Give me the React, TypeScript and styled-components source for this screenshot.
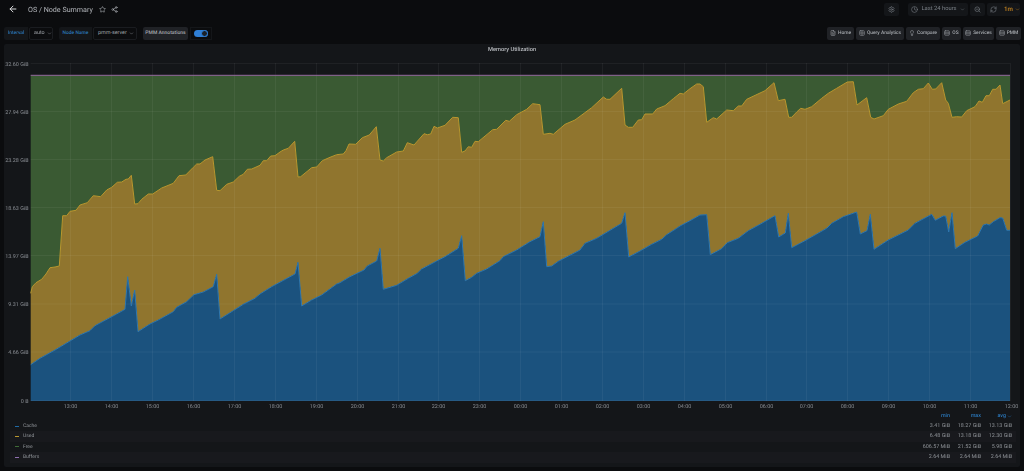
import React from "react";
import styled, { createGlobalStyle } from "styled-components";
import { ArrowLeft, Star, Share2, Settings, Clock, ZoomOut, RefreshCw, ChevronDown, FileText, Grid2x2, Lightbulb, Rows3 } from "lucide-react";

const Global = createGlobalStyle`
  html, body { margin: 0; height: 471px; overflow: hidden; background: #0b0c0e; }
  body { font-family: Roboto, "Liberation Sans", sans-serif; color: #c7d0d9; text-rendering: geometricPrecision; }
`;

const Page = styled.div`
  display: flex;
  flex-direction: column;
  height: 471px;
  width: 1024px;
  filter: blur(0.35px);
`;
const TopBar = styled.header`
  display: flex;
  align-items: center;
  height: 18px;
  padding: 0 4px 0 8px;
  flex: none;
`;
const Back = styled.span`
  display: flex;
  width: 20px;
  color: #d8d9da;
`;
const Title = styled.h1`
  margin: 1px 6px 0 0;
  font-size: 7.15px;
  line-height: 17px;
  font-weight: 400;
  color: #b4b7bc;
`;
const PlainIcon = styled.span`
  display: flex;
  margin-right: 5px;
  color: #b4b7bc;
`;
const Spacer = styled.div`
  flex: 1;
`;
const TopButton = styled.div<{ $w: number; $gap?: number }>`
  display: flex;
  align-items: center;
  justify-content: center;
  gap: 3px;
  width: ${(p) => p.$w}px;
  height: 13px;
  line-height: 13px;
  margin-left: ${(p) => p.$gap ?? 2}px;
  background: #141619;
  border-radius: 2px;
  font-size: 5.8px;
  color: #7b8087;
  white-space: nowrap;
`;
const RefreshButton = styled(TopButton)`
  justify-content: flex-start;
  box-sizing: border-box;
  padding-left: 3px;
  gap: 7px;
`;
const Orange = styled.span`
  color: #c9861f;
  display: flex;
  align-items: center;
  gap: 2px;
  font-size: 6.2px;
  font-weight: 500;
`;
const VarRow = styled.div`
  display: flex;
  align-items: center;
  height: 14px;
  margin-top: 8px;
  padding: 0 3px 0 4px;
  flex: none;
`;
const VarLabel = styled.div<{ $w: number }>`
  display: flex;
  align-items: center;
  justify-content: center;
  width: ${(p) => p.$w}px;
  height: 13px;
  line-height: 13px;
  background: #141619;
  border-radius: 2px 0 0 2px;
  color: #2a76b8;
  font-size: 4.9px;
  font-weight: 500;
  white-space: nowrap;
`;
const VarValue = styled.div<{ $w: number; $after?: number }>`
  display: flex;
  align-items: center;
  gap: 2px;
  width: ${(p) => p.$w}px;
  height: 13px;
  line-height: 11px;
  margin-left: 1px;
  margin-right: ${(p) => p.$after ?? 6}px;
  padding-left: 4px;
  box-sizing: border-box;
  background: #0b0c0e;
  border: 1px solid #1a1c20;
  border-radius: 2px;
  color: #9fa3a9;
  font-size: 5.4px;
  white-space: nowrap;
`;
const AnnotLabel = styled.div`
  display: flex;
  align-items: center;
  justify-content: center;
  width: 45px;
  height: 13px;
  line-height: 13px;
  background: #202226;
  border-radius: 2px;
  color: #a5a9ae;
  font-size: 5px;
  font-weight: 500;
  white-space: nowrap;
`;
const SwitchBox = styled.div`
  display: flex;
  align-items: center;
  justify-content: center;
  width: 22px;
  height: 13px;
  margin-left: 2px;
  background: #0b0c0e;
  border: 1px solid #141619;
  box-sizing: border-box;
`;
const SwitchTrack = styled.div`
  position: relative;
  width: 14px;
  height: 7px;
  border-radius: 4px;
  background: #2f7fd6;
`;
const SwitchKnob = styled.div`
  position: absolute;
  right: 0;
  top: 0;
  width: 5px;
  height: 5px;
  border: 1px solid #2f7fd6;
  border-radius: 50%;
  background: #1b2128;
`;
const LinkBtn = styled.div<{ $w: number }>`
  display: flex;
  align-items: center;
  justify-content: center;
  gap: 2px;
  width: ${(p) => p.$w}px;
  height: 13px;
  line-height: 13px;
  margin-left: 2px;
  background: #202226;
  border-radius: 2px;
  color: #a5a9ae;
  font-size: 4.9px;
  font-weight: 500;
  white-space: nowrap;
`;
const Panel = styled.section`
  display: flex;
  flex-direction: column;
  flex: none;
  margin: 4px 0 0 4px;
  width: 1016px;
  height: 423px;
  background: #141619;
  border-radius: 2px;
`;
const PanelTitle = styled.h2`
  margin: 0;
  height: 12px;
  line-height: 12px;
  text-align: center;
  font-size: 5.7px;
  font-weight: 500;
  color: #b8bbbf;
  flex: none;
`;
const ChartSvg = styled.svg`
  display: block;
  flex: none;
`;
const AxisText = styled.text`
  font-size: 5.4px;
  fill: #8b8f95;
  font-family: Roboto, "Liberation Sans", sans-serif;
`;
const Legend = styled.div`
  display: flex;
  flex-direction: column;
  padding: 0 4px 0 6px;
`;
const columns = "1fr 35px 31px 31px";
const LegendHead = styled.div`
  display: grid;
  grid-template-columns: ${columns};
  height: 9px;
  line-height: 9px;
  padding-right: 4px;
  color: #2a76b8;
  font-size: 5.4px;
  font-weight: 500;
  text-align: right;
`;
const SortCell = styled.span`
  display: flex;
  align-items: center;
  justify-content: flex-end;
  gap: 1px;
`;
const LegendRow = styled.div<{ $alt?: boolean }>`
  display: grid;
  grid-template-columns: ${columns};
  align-items: center;
  height: 10.4px;
  line-height: 10.4px;
  padding-right: 4px;
  font-size: 5.4px;
  color: #8f9398;
  text-align: right;
  background: ${(p) => (p.$alt ? "#18191d" : "transparent")};
`;
const SeriesName = styled.div`
  display: flex;
  align-items: center;
  gap: 4px;
  padding-left: 5px;
  font-size: 5px;
  text-align: left;
`;
const Swatch = styled.span<{ $c: string }>`
  width: 4px;
  height: 1px;
  background: ${(p) => p.$c};
`;

const to = (ox: number, pts: number[][]) => pts.map(([x, y]) => [ox + x / 3, 60 + y / 3]);

const used = [
  ...to(0, [[92,700],[97,680],[108,668],[125,658],[138,642],[150,623],[165,621],[178,618],[188,467],[200,467],[210,454],[228,451],[240,435],[262,428],[280,407],[302,410],[320,390],[335,382],[352,367],[365,366],[378,358],[385,357],[394,346],[404,432],[414,431],[425,418],[445,402],[458,402],[485,384],[520,370],[537,347],[557,345],[580,322],[590,312],[600,312],[615,300],[638,290],[650,391],[660,392],[680,373],[700,366],[718,349],[730,343],[742,328],[755,327],[780,316],[790,302],[800,302],[812,288],[825,287],[840,276],[850,270],[865,265],[884,244],[894,351],[902,350],[935,323],[950,321],[967,302],[990,292],[1010,284]]),
  ...to(340, [[0,283],[10,282],[18,272],[27,252],[47,253],[67,233],[88,225],[109,200],[120,300],[130,303],[140,293],[170,276],[190,273],[202,248],[222,255],[252,221],[262,224],[272,222],[282,199],[292,204],[315,196],[338,172],[355,173],[365,277],[375,273],[385,260],[395,262],[405,244],[415,245],[458,209],[470,208],[497,181],[508,184],[530,164],[560,148],[578,131],[600,134],[610,223],[630,220],[640,223],[675,193],[705,180],[755,143],[790,111],[800,118],[810,118],[845,85],[855,195],[865,202],[878,202],[895,180],[905,179],[915,162],[938,162],[950,147],[975,137],[1000,116]]),
  ...to(680, [[0,100],[10,102],[30,86],[50,72],[60,72],[70,80],[80,187],[100,173],[110,177],[140,150],[160,152],[175,138],[185,138],[200,118],[255,92],[282,68],[295,122],[315,118],[326,172],[335,172],[350,156],[362,145],[375,148],[395,140],[425,115],[445,100],[470,85],[502,66],[520,65],[531,135],[560,113],[572,172],[582,177],[610,167],[625,148],[655,132],[680,124],[700,98],[715,88],[730,86],[745,69],[757,88],[767,87],[785,68],[797,120],[805,130],[816,172],[830,170],[845,171],[860,152],[885,140],[897,123],[907,127],[918,107],[928,107],[938,88],[948,88],[960,75],[968,131],[990,120]]),
];
const cache = [
  ...to(0, [[92,914],[120,895],[165,870],[240,825],[270,812],[285,797],[350,762],[375,748],[383,650],[394,738],[404,690],[414,815],[450,792],[475,780],[520,755],[530,742],[560,725],[582,704],[610,696],[640,680],[650,643],[660,777],[700,752],[730,733],[765,715],[780,702],[815,680],[885,642],[894,607],[905,738],[935,720],[965,705],[1010,672]]),
  ...to(340, [[0,668],[30,650],[72,630],[82,618],[110,603],[120,565],[130,688],[150,682],[170,676],[205,655],[232,640],[245,627],[290,603],[315,590],[355,565],[365,527],[376,662],[395,652],[410,640],[440,627],[480,602],[490,590],[530,570],[570,545],[600,530],[610,485],[620,620],[635,618],[655,604],[720,570],[735,550],[770,535],[845,490],[855,458],[866,591],[900,573],[935,553],[965,538],[980,524],[1010,505]]),
  ...to(680, [[0,498],[30,482],[60,465],[80,464],[91,584],[125,566],[142,548],[175,535],[205,512],[240,493],[285,467],[296,531],[316,519],[325,460],[335,563],[375,542],[440,505],[455,490],[490,470],[530,456],[541,522],[561,512],[571,463],[582,568],[625,540],[685,510],[705,490],[755,463],[766,481],[790,468],[797,468],[806,516],[816,458],[826,566],[855,547],[893,528],[910,495],[920,492],[928,495],[940,485],[960,473],[968,474],[980,511],[990,511]]),
];
const line = (p: number[][]) => p.map(([x, y]) => `${x.toFixed(1)},${y.toFixed(1)}`).join(" ");
const L = 30.7, R = 1010, T = 75.3, B = 401;
const area = (top: number[][], bottom: number[][]) => line([...top, ...[...bottom].reverse()]);

const yTicks = [
  ["32.60 GiB", 63.5], ["27.94 GiB", 111.5], ["23.28 GiB", 159.5], ["18.63 GiB", 207.5],
  ["13.97 GiB", 255.5], ["9.31 GiB", 304], ["4.66 GiB", 352], ["0 B", 400.5],
] as [string, number][];
const hours = ["13:00","14:00","15:00","16:00","17:00","18:00","19:00","20:00","21:00","22:00","23:00","00:00","01:00","02:00","03:00","04:00","05:00","06:00","07:00","08:00","09:00","10:00","11:00","12:00"];

const rows = [
  ["Cache", "#1f6aa5", "3.41 GiB", "18.27 GiB", "13.13 GiB"],
  ["Used", "#b8982f", "6.48 GiB", "13.18 GiB", "12.30 GiB"],
  ["Free", "#3f6b36", "606.57 MiB", "21.52 GiB", "5.98 GiB"],
  ["Buffers", "#8f6fb0", "2.64 MiB", "2.64 MiB", "2.64 MiB"],
];

const Chart = () => (
  <ChartSvg width={1016} height={356} viewBox="4 56 1016 356">
    <polygon points={area([[L, T], [R, T]], used)} fill="#3a5a33" />
    <polygon points={area(used, cache)} fill="#90752e" />
    <polygon points={area(cache, [[L, B], [R, B]])} fill="#1b527e" />
    {yTicks.map(([t, y]) => (
      <g key={t}>
        <line x1={L} x2={1010} y1={y} y2={y} stroke="#fff" strokeOpacity={0.05} strokeWidth={1} />
        <AxisText x={28.5} y={y + 2} textAnchor="end">{t}</AxisText>
      </g>
    ))}
    {hours.map((h, i) => {
      const x = Math.round(70.3 + i * 40.9) + 0.5;
      return (
        <g key={h}>
          <line x1={x > 1010 ? 1010.5 : x} x2={x > 1010 ? 1010.5 : x} y1={63} y2={401} stroke="#fff" strokeOpacity={0.05} />
          <AxisText x={x} y={408} textAnchor="middle">{h}</AxisText>
        </g>
      );
    })}
    <polyline points={line(used)} fill="none" stroke="#b8982f" strokeWidth={1} />
    <polyline points={line(cache)} fill="none" stroke="#2f78b0" strokeWidth={1} />
    <line x1={L} x2={R} y1={75.3} y2={75.3} stroke="#94689f" strokeWidth={1} />
  </ChartSvg>
);

export default function App() {
  return (
    <Page>
      <Global />
      <TopBar>
        <Back><ArrowLeft size={10} strokeWidth={2.4} /></Back>
        <Title>OS / Node Summary</Title>
        <PlainIcon><Star size={7} /></PlainIcon>
        <PlainIcon><Share2 size={7} /></PlainIcon>
        <Spacer />
        <TopButton $w={15}><Settings size={7} /></TopButton>
        <TopButton $w={60} $gap={9}><Clock size={7} />Last 24 hours<ChevronDown size={5} /></TopButton>
        <TopButton $w={15}><ZoomOut size={7} /></TopButton>
        <RefreshButton $w={33}><RefreshCw size={7} /><Orange>1m<ChevronDown size={5} /></Orange></RefreshButton>
      </TopBar>
      <VarRow>
        <VarLabel $w={24}>Interval</VarLabel>
        <VarValue $w={24}>auto<ChevronDown size={5} /></VarValue>
        <VarLabel $w={33}>Node Name</VarLabel>
        <VarValue $w={44}>pmm-server<ChevronDown size={5} /></VarValue>
        <AnnotLabel>PMM Annotations</AnnotLabel>
        <SwitchBox><SwitchTrack><SwitchKnob /></SwitchTrack></SwitchBox>
        <Spacer />
        <LinkBtn $w={27}><FileText size={6} />Home</LinkBtn>
        <LinkBtn $w={48}><Grid2x2 size={6} />Query Analytics</LinkBtn>
        <LinkBtn $w={34}><Lightbulb size={6} />Compare</LinkBtn>
        <LinkBtn $w={19}><Rows3 size={6} />OS</LinkBtn>
        <LinkBtn $w={31}><Rows3 size={6} />Services</LinkBtn>
        <LinkBtn $w={25}><Rows3 size={6} />PMM</LinkBtn>
      </VarRow>
      <Panel>
        <PanelTitle>Memory Utilization</PanelTitle>
        <Chart />
        <Legend>
          <LegendHead><span /><span>min</span><span>max</span><SortCell>avg<ChevronDown size={5} /></SortCell></LegendHead>
          {rows.map((r, i) => (
            <LegendRow key={r[0]} $alt={i % 2 === 1}>
              <SeriesName><Swatch $c={r[1]} />{r[0]}</SeriesName>
              <span>{r[2]}</span><span>{r[3]}</span><span>{r[4]}</span>
            </LegendRow>
          ))}
        </Legend>
      </Panel>
    </Page>
  );
}
